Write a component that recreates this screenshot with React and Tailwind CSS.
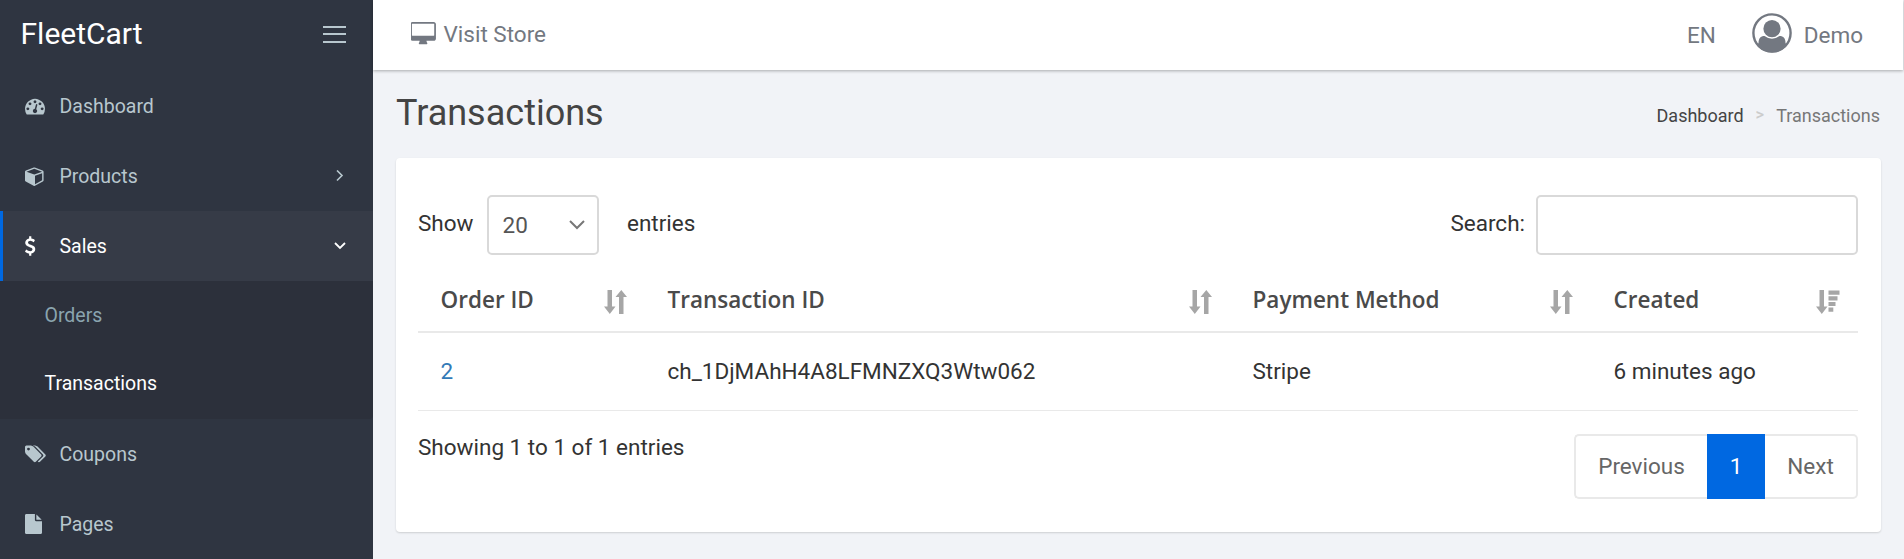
const PATHS = {
  dashboard: "M384 1152q0-53-37.5-90.5t-90.5-37.5-90.5 37.5-37.5 90.5 37.5 90.5 90.5 37.5 90.5-37.5 37.5-90.5zm192-448q0-53-37.5-90.5t-90.5-37.5-90.5 37.5-37.5 90.5 37.5 90.5 90.5 37.5 90.5-37.5 37.5-90.5zm428 481l101-382q6-26-7.5-48.5t-38.5-29.5-48 6.5-30 39.5l-101 382q-60 5-107 43.5t-63 98.5q-20 77 20 146t117 89 146-20 89-117q16-60-6-117t-72-91zm660-33q0-53-37.5-90.5t-90.5-37.5-90.5 37.5-37.5 90.5 37.5 90.5 90.5 37.5 90.5-37.5 37.5-90.5zm-640-640q0-53-37.5-90.5t-90.5-37.5-90.5 37.5-37.5 90.5 37.5 90.5 90.5 37.5 90.5-37.5 37.5-90.5zm448 192q0-53-37.5-90.5t-90.5-37.5-90.5 37.5-37.5 90.5 37.5 90.5 90.5 37.5 90.5-37.5 37.5-90.5zm320 448q0 261-141 483-19 29-54 29h-1402q-35 0-54-29-141-221-141-483 0-182 71-348t191-286 286-191 348-71 348 71 286 191 191 286 71 348z",
  cube: "M896 1629l640-349v-636l-640 233v752zm-64-865l698-254-698-254-698 254zm832-252v768q0 35-18 65t-49 47l-704 384q-28 16-61 16t-61-16l-704-384q-31-17-49-47t-18-65v-768q0-40 23-73t61-47l704-256q22-8 44-8t44 8l704 256q38 14 61 47t23 73z",
  dollar: "M1362 1185q0 153-99.5 263.5t-258.5 136.5v175q0 14-9 23t-23 9h-135q-13 0-22.5-9.5t-9.5-22.5v-175q-66-9-127.5-31t-101.5-44.5-74-48-46.5-37.5-17.5-18q-17-21-2-41l103-135q7-10 23-12 15-2 24 9l2 2q113 99 243 125 37 8 74 8 81 0 142.5-43t61.5-122q0-28-15-53t-33.5-42-58.5-37.5-66-32-80-32.5q-39-16-61.5-25t-61.5-26.5-62.5-31-56.5-35.5-53.5-42.5-43.5-49-35.5-58-21-66.5-8.5-78q0-138 98-242t255-134v-180q0-13 9.5-22.5t22.5-9.5h135q14 0 23 9t9 23v176q57 6 110.5 23t87 33.5 63.5 37.5 39 29 15 14q17 18 5 38l-81 146q-8 15-23 16-14 3-27-7-3-3-14.5-12t-39-26.5-58.5-32-74.5-26-85.5-11.5q-95 0-155 43t-60 111q0 26 8.5 48t29.5 41.5 39.5 33 56 31 60.5 27 70 27.5q53 20 81 31.5t76 35 75.5 42.5 62 50 53 63.5 31.5 76.5 13 94z",
  tags: "M448 448q0-53-37.5-90.5t-90.5-37.5-90.5 37.5-37.5 90.5 37.5 90.5 90.5 37.5 90.5-37.5 37.5-90.5zm1067 576q0 53-37 90l-491 492q-39 37-91 37-53 0-90-37l-715-716q-38-37-64.5-101t-26.5-117v-416q0-52 38-90t90-38h416q53 0 117 26.5t102 64.5l715 714q37 39 37 91zm384 0q0 53-37 90l-491 492q-39 37-91 37-36 0-59-14t-53-45l470-470q37-37 37-90 0-52-37-91l-715-714q-38-38-102-64.5t-117-26.5h224q53 0 117 26.5t102 64.5l715 714q37 39 37 91z",
  file: "M1152 512v-472q22 14 36 28l408 408q14 14 28 36h-472zm-128 32q0 40 28 68t68 28h544v1056q0 40-28 68t-68 28h-1344q-40 0-68-28t-28-68v-1600q0-40 28-68t68-28h800v544z",
  desktop: "M1728 992v-832q0-13-9.5-22.5t-22.5-9.5h-1600q-13 0-22.5 9.5t-9.5 22.5v832q0 13 9.5 22.5t22.5 9.5h1600q13 0 22.5-9.5t9.5-22.5zm128-832v1088q0 66-47 113t-113 47h-544q0 37 16 77.5t32 71 16 43.5q0 26-19 45t-45 19h-512q-26 0-45-19t-19-45q0-14 16-44t32-70 16-78h-544q-66 0-113-47t-47-113v-1088q0-66 47-113t113-47h1600q66 0 113 47t47 113z",
};

function Glyph({ name, box, className }) {
  return (
    <svg viewBox={box} className={className} fill="currentColor" aria-hidden="true">
      <path d={PATHS[name]} />
    </svg>
  );
}

function NavItem({ icon, box, size, label, children, active }) {
  return (
    <a
      className={
        active
          ? "flex h-[70px] items-center border-l-[3px] border-[#0068e1] bg-[#363b47] pl-[22px] pr-[27px] text-white"
          : "flex h-[70px] items-center pl-[25px] pr-[27px] text-[#b8c7ce]"
      }
    >
      <span className="flex w-[34.5px] items-center">
        <Glyph name={icon} box={box} className={size} />
      </span>
      <span className="flex-1 pt-[2px] text-[19.5px] leading-none">{label}</span>
      {children}
    </a>
  );
}

function SortIcon() {
  return (
    <svg viewBox="0 0 24 26" className="h-[26px] w-6" fill="#a6a6a6" aria-hidden="true">
      <path d="M3.500 1h4.500v16.500h3.500L5.800 25 0 17.500h3.500z" />
      <path d="M15 25h4.500V8H23L17.300 1 11.500 8H15z" />
    </svg>
  );
}

function SortDescIcon() {
  return (
    <svg viewBox="0 0 24 26" className="h-[26px] w-6" fill="#a6a6a6" aria-hidden="true">
      <path d="M3.500 1h4.500v16.500h3.500L5.800 25 0 17.500h3.500z" />
      <path d="M12.500 1.500h11v4.200h-11zM12.500 7.200h9v4.200h-9zM12.500 12.900h7v4.200h-7zM12.500 18.600h4.800v4.200h-4.800z" />
    </svg>
  );
}

function HeadCell({ label, className, children }) {
  return (
    <div className={className}>
      <span className="pt-[2px] font-['Open_Sans',sans-serif] text-[22.5px] font-semibold leading-none text-[#4a4a4a]">{label}</span>
      <span className="pt-[6px]">{children}</span>
    </div>
  );
}

export default function App() {
  return (
    <div className="flex h-[559px] w-full overflow-hidden bg-[#f1f3f7] font-[Roboto,sans-serif] text-[22.5px] text-[#333333]">
      <aside className="flex w-[373px] shrink-0 flex-col bg-[#2f3541]">
        <div className="flex h-[71px] items-center justify-between pl-[20.5px] pr-[27px]">
          <span className="pb-[4px] text-[30px] leading-none text-white">FleetCart</span>
          <svg viewBox="0 0 23 20" className="mb-px h-5 w-[23px]" fill="#b8c7ce" aria-hidden="true">
            <path d="M0 1h23v2H0zM0 8h23v2H0zM0 16h23v2H0z" />
          </svg>
        </div>
        <nav>
          <NavItem icon="dashboard" box="0 0 1792 1792" size="size-5" label="Dashboard" />
          <NavItem icon="cube" box="0 0 1792 1792" size="size-5" label="Products">
            <svg viewBox="0 0 12 12" className="size-3" fill="none" stroke="currentColor" strokeWidth="1.6">
              <path d="M3 .5l5 5-5 5" />
            </svg>
          </NavItem>
          <NavItem icon="dollar" box="430 0 1000 1792" size="h-5 w-[11px]" label="Sales" active>
            <svg viewBox="0 0 12 12" className="size-3" fill="none" stroke="currentColor" strokeWidth="1.8">
              <path d="M1 3l5 5 5-5" />
            </svg>
          </NavItem>
          <div className="flex h-[138px] flex-col rounded-br-[4px] bg-[#2c303b] pb-px pl-[44.5px] text-[19.5px]">
            <a className="flex flex-1 items-center text-[#8aa4af]">Orders</a>
            <a className="flex flex-1 items-center text-white">Transactions</a>
          </div>
          <NavItem icon="tags" box="0 0 1920 1792" size="h-5 w-[21px]" label="Coupons" />
          <NavItem icon="file" box="128 0 1536 1792" size="h-5 w-[17px]" label="Pages" />
        </nav>
      </aside>

      <main className="flex min-w-0 flex-1 flex-col">
        <header className="mr-px flex h-[70px] shrink-0 items-center justify-between bg-white pl-[37.5px] pr-[40px] leading-none text-[#737881] shadow-[0_1px_3px_rgba(0,0,0,0.3)]">
          <a className="flex items-center gap-2 pb-[2px]">
            <Glyph name="desktop" box="0 0 1856 1792" className="h-6 w-[25px]" />
            <span>Visit Store</span>
          </a>
          <div className="flex items-center">
            <span className="mr-9">EN</span>
            <svg viewBox="0 0 40 40" className="mr-3 mb-1 size-10" aria-hidden="true">
              <defs>
                <clipPath id="avatar-disc">
                  <circle cx="20" cy="20" r="19.500" />
                </clipPath>
              </defs>
              <circle cx="20" cy="20" r="18.600" fill="none" stroke="#737881" strokeWidth="2.400" />
              <circle cx="20" cy="15.700" r="8.600" fill="#737881" />
              <path
                d="M4 34l2.500-4C6.500 25.500 8.500 23 12.500 23q7.500 5.500 15 0C31.500 23 33.500 25.500 33.500 30l2.500 4v6H4z"
                fill="#737881"
                clipPath="url(#avatar-disc)"
              />
            </svg>
            <span>Demo</span>
          </div>
        </header>

        <div className="flex h-[88px] shrink-0 items-center justify-between pl-[23px] pr-[24px]">
          <h1 className="pb-[3px] text-[36px] leading-none text-[#444444]">Transactions</h1>
          <div className="flex items-center gap-[12px] pt-[3px] text-[18px] leading-none">
            <span className="text-[#444444]">Dashboard</span>
            <span className="text-[16.5px] font-medium text-[#cccccc]">&gt;</span>
            <span className="text-[#777777]">Transactions</span>
          </div>
        </div>

        <section className="ml-[23px] mr-[23px] flex h-[374px] shrink-0 flex-col rounded-[4px] bg-white pl-[22px] pr-[23px] pt-[37px] shadow-[0_1px_2px_rgba(0,0,0,0.15)]">
          <div className="flex h-[60px] items-center justify-between">
            <div className="flex items-center leading-none">
              <span className="pb-1">Show</span>
              <div className="ml-[13px] flex h-[60px] w-28 items-center justify-between rounded-[5px] border-2 border-[#d9d9d9] pl-[14px] pr-3 text-[#555555]">
                <span>20</span>
                <svg viewBox="0 0 16 10" className="h-[10px] w-4" fill="none" stroke="#777777" strokeWidth="2">
                  <path d="M1 1l7 7 7-7" />
                </svg>
              </div>
              <span className="ml-[28.5px] pb-1">entries</span>
            </div>
            <div className="flex items-center gap-[11px] leading-none">
              <span className="pb-1">Search:</span>
              <input className="h-[60px] w-[322px] rounded-[5px] border-2 border-[#d9d9d9] bg-white px-4 outline-none" />
            </div>
          </div>

          <div className="flex h-[78px] shrink-0 border-b-2 border-[#e9e9e9] pt-[12px]">
            <HeadCell label="Order ID" className="flex w-[227px] items-center justify-between pl-[22.5px] pr-[17.5px]"><SortIcon /></HeadCell>
            <HeadCell label="Transaction ID" className="flex w-[585px] items-center justify-between pl-[22.5px] pr-[17.5px]"><SortIcon /></HeadCell>
            <HeadCell label="Payment Method" className="flex w-[361px] items-center justify-between pl-[22.5px] pr-[17.5px]"><SortIcon /></HeadCell>
            <HeadCell label="Created" className="flex flex-1 items-center justify-between pl-[22.5px] pr-[18px]"><SortDescIcon /></HeadCell>
          </div>

          <div className="flex h-[78px] shrink-0 items-center border-b border-[#e9e9e9] leading-none">
            <span className="w-[227px] pl-[22.5px] text-[#337ab7]">2</span>
            <span className="w-[585px] pl-[22.5px]">ch_1DjMAhH4A8LFMNZXQ3Wtw062</span>
            <span className="w-[361px] pl-[22.5px]">Stripe</span>
            <span className="flex-1 pl-[22.5px]">6 minutes ago</span>
          </div>

          <div className="flex items-start justify-between pt-[23px] leading-none">
            <span className="pt-[2px]">Showing 1 to 1 of 1 entries</span>
            <div className="flex h-[65px] text-[#666666]">
              <a className="flex w-[133px] items-center justify-center rounded-l-[5px] border-2 border-r-0 border-[#e9e9e9]">Previous</a>
              <a className="flex w-[58px] items-center justify-center bg-[#0068e1] text-white">1</a>
              <a className="flex w-[93px] items-center justify-center rounded-r-[5px] border-2 border-l-0 border-[#e9e9e9]">Next</a>
            </div>
          </div>
        </section>
      </main>
    </div>
  );
}
